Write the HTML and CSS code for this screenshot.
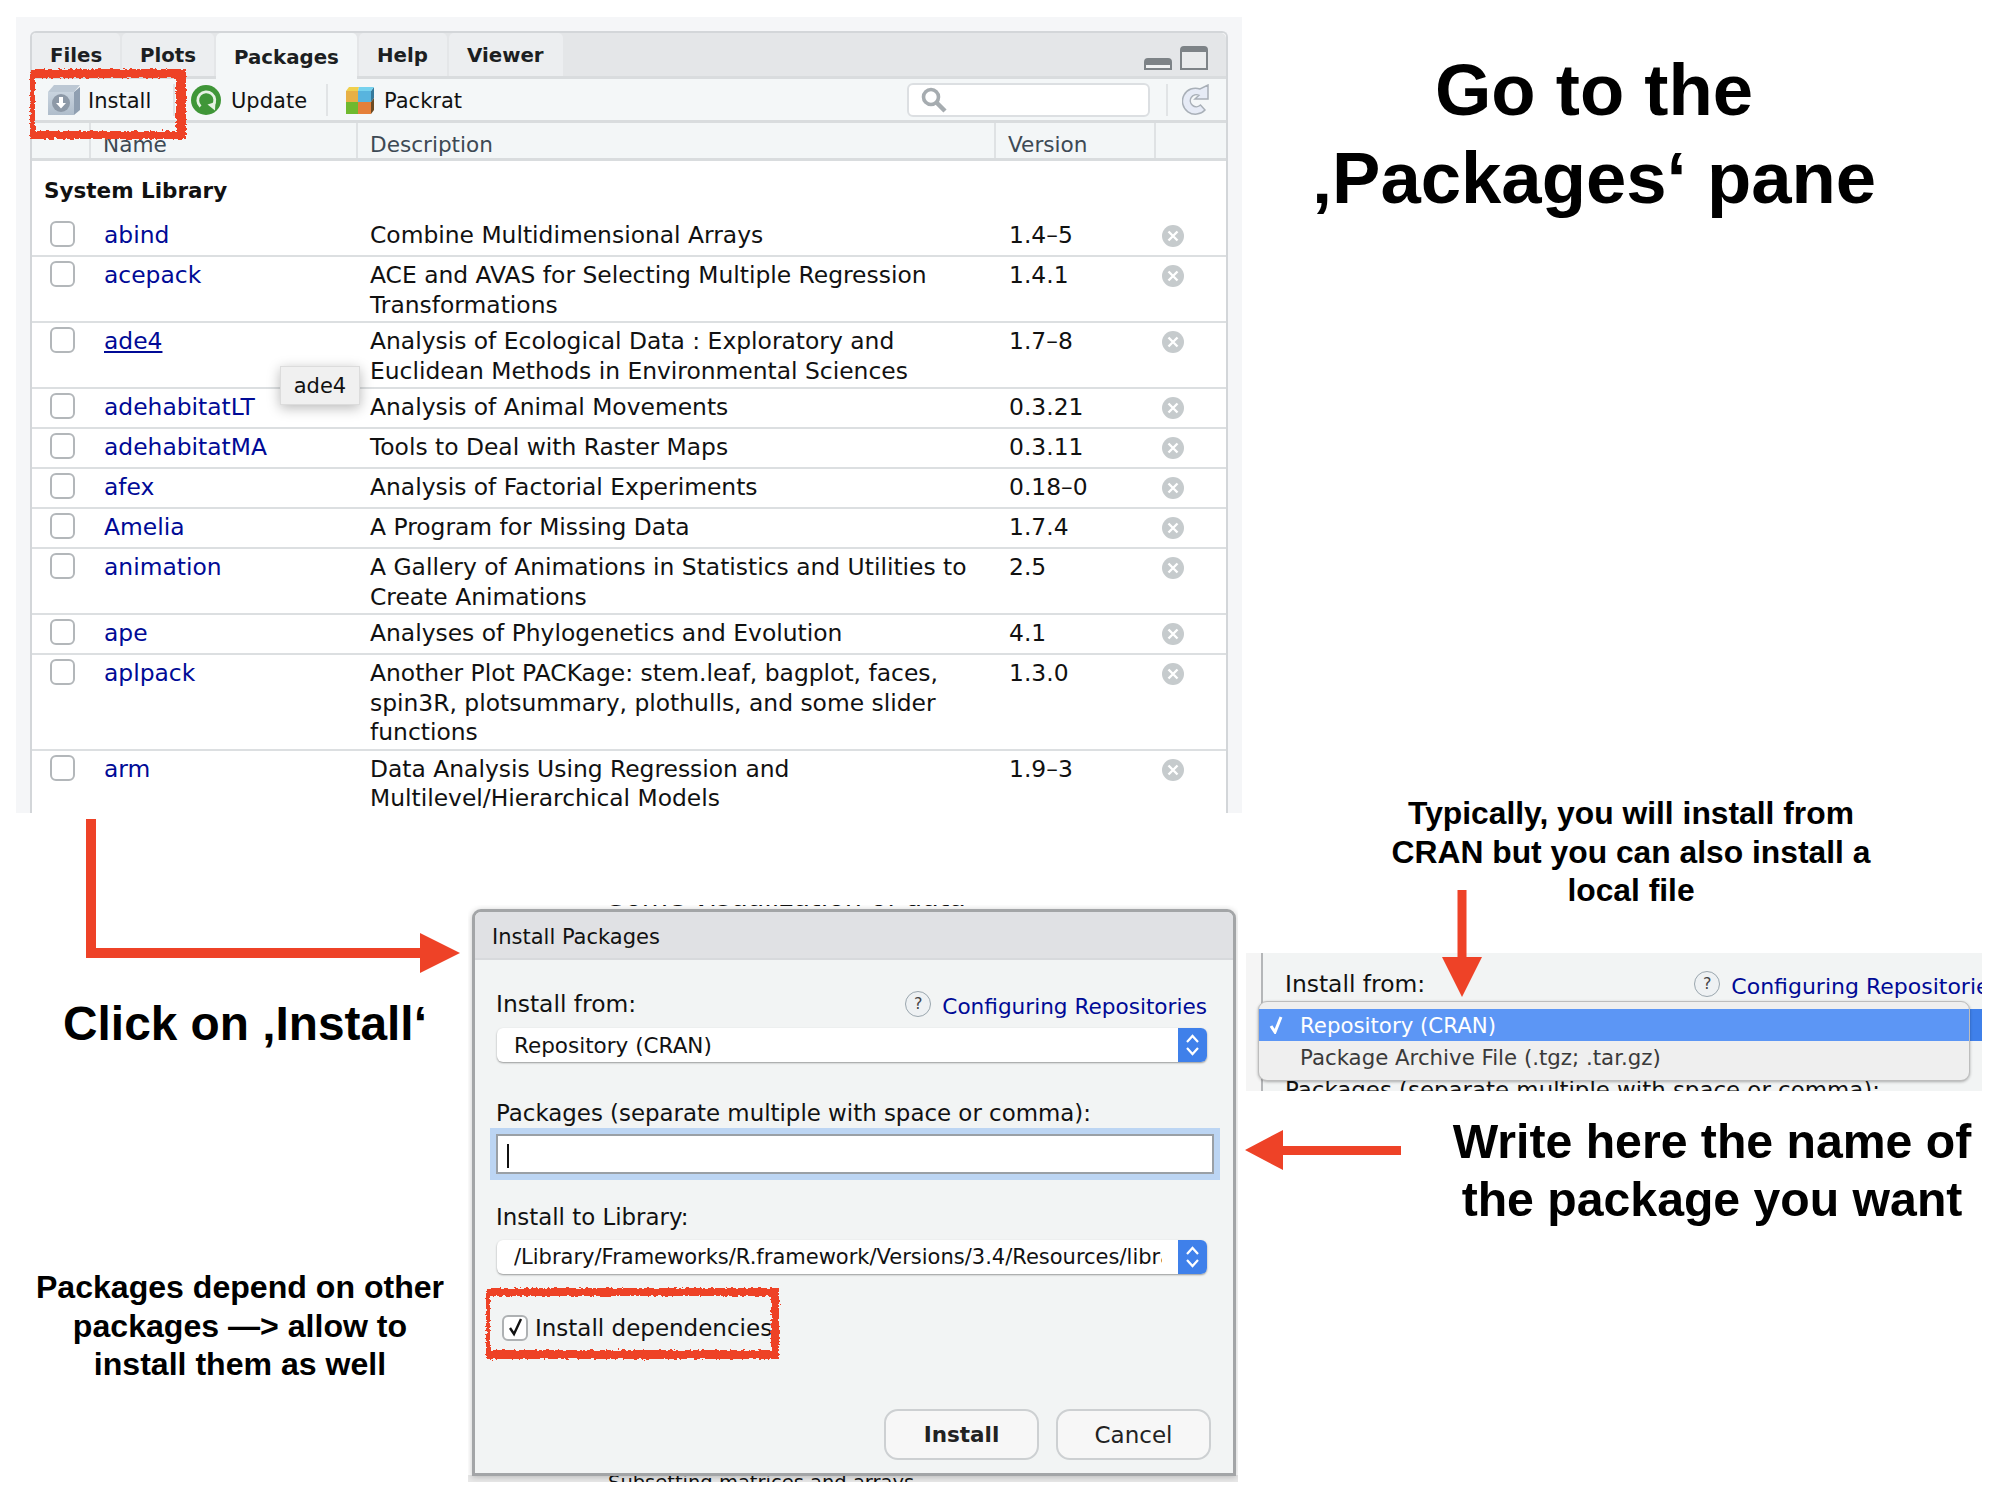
FILE: index.html
```html
<!DOCTYPE html>
<html lang="en">
<head>
<meta charset="utf-8">
<title>Install packages in RStudio</title>
<link rel="stylesheet" href="styles.css">
</head>
<body>
<svg class="defs" width="0" height="0" aria-hidden="true">
  <defs>
    <filter id="rough" x="-5%" y="-10%" width="110%" height="120%">
      <feTurbulence type="fractalNoise" baseFrequency="0.25 0.5" numOctaves="2" seed="4"/>
      <feDisplacementMap in="SourceGraphic" scale="5"/>
    </filter>
    <linearGradient id="boxface" x1="0" y1="0" x2="0" y2="1"><stop offset="0" stop-color="#c9d4df"/><stop offset="1" stop-color="#afbdcb"/></linearGradient>
    <symbol id="remove" viewBox="0 0 22 22">
      <circle cx="11" cy="11" r="11" fill="#c6cbcd"/>
      <path d="M6.5 6.5l9 9M15.5 6.5l-9 9" stroke="#fff" stroke-width="2.4"/>
    </symbol>
    <symbol id="updown" viewBox="0 0 29 34">
      <path d="M9 14l5.500-6 5.500 6M9 20l5.500 6 5.500-6" fill="none" stroke="#fff" stroke-width="2.200"/>
    </symbol>
  </defs>
</svg>

<main class="canvas">
  <section class="pane-shot">
    <div class="window">
      <div class="tabbar">
        <div class="tab tab-files">Files</div>
        <div class="tab tab-plots">Plots</div>
        <div class="tab tab-active">Packages</div>
        <div class="tab tab-help">Help</div>
        <div class="tab tab-viewer">Viewer</div>
        <div class="win-controls">
          <svg width="28" height="12" viewBox="0 0 28 12"><path d="M1 11V4a3 3 0 0 1 3-3h20a3 3 0 0 1 3 3v7z" fill="#f1f3f4" stroke="#7d8387" stroke-width="2"/><path d="M1 7V4a3 3 0 0 1 3-3h20a3 3 0 0 1 3 3v3z" fill="#7d8387"/></svg>
          <svg width="28" height="24" viewBox="0 0 28 24"><path d="M1 23V4a3 3 0 0 1 3-3h20a3 3 0 0 1 3 3v19z" fill="#e9ebec" stroke="#7d8387" stroke-width="2"/><path d="M1 6V4a3 3 0 0 1 3-3h20a3 3 0 0 1 3 3v2z" fill="#7d8387"/></svg>
        </div>
      </div>
      <div class="toolbar">
        <div class="tool tool-install">
          <svg width="32" height="30" viewBox="0 0 32 30"><path d="M0 7h26v23H0z" fill="url(#boxface)"/><path d="M26 7l6-5v23l-6 5z" fill="#8f9fb1"/><path d="M0 7l6-7h26l-6 7z" fill="#bcc8d4"/><circle cx="13" cy="18" r="9" fill="#8d99a7"/><path d="M11 12h4v6h3l-5 5.500-5-5.500h3z" fill="#fff"/></svg>
          <span class="tool-label">Install</span>
        </div>
        <div class="tool-sep sep-install"></div>
        <div class="tool tool-update">
          <svg width="30" height="30" viewBox="0 0 30 30"><circle cx="15" cy="15" r="15" fill="#3f9638"/><path d="M9.500 21.500a8.500 8.500 0 1 1 12.500-1" fill="none" stroke="#e6f2e4" stroke-width="2.800"/><path d="M16.500 19.500l8-2.500-.5 8.500z" fill="#e6f2e4"/></svg>
          <span class="tool-label">Update</span>
        </div>
        <div class="tool-sep sep-update"></div>
        <div class="tool tool-packrat">
          <svg width="28" height="28" viewBox="0 0 28 28"><path d="M0 5h12v11H0z" fill="#e7b045"/><path d="M12 5h13v11H12z" fill="#58b4de"/><path d="M0 16h12v12H0z" fill="#6fb92f"/><path d="M12 16h13v12H12z" fill="#e5803a"/><path d="M25 5l3-4v11l-3 4z" fill="#35799b"/><path d="M25 16l3-4v12l-3 4z" fill="#6b4a23"/><path d="M0 5l3-4h10l-1 4z" fill="#f0d04c"/><path d="M12 5l1-4h15l-3 4z" fill="#76d2ee"/></svg>
          <span class="tool-label">Packrat</span>
        </div>
        <div class="search">
          <svg width="26" height="26" viewBox="0 0 26 26"><circle cx="10" cy="10" r="7.500" fill="none" stroke="#a6acb0" stroke-width="3.600"/><path d="M15.500 15.500L24 24" stroke="#a6acb0" stroke-width="4.500"/></svg>
        </div>
        <div class="tool-sep"></div>
        <svg class="refresh" width="28" height="31" viewBox="0 0 28 31"><path d="M23 26A13 13 0 1 1 18 5L26 1V15H13L17 11.300A6 6 0 1 0 18.500 21Z" fill="#e6ebf6" stroke="#a9b0b8" stroke-width="1.500"/></svg>
      </div>
      <div class="thead">
        <div class="th th-check"></div>
        <div class="th th-name">Name</div>
        <div class="th th-desc">Description</div>
        <div class="th th-version">Version</div>
        <div class="th"></div>
      </div>
      <div class="library">System Library</div>
      <div class="row"><span class="box"></span><a class="pkg">abind</a><span class="desc">Combine Multidimensional Arrays</span><span class="ver">1.4–5</span><svg class="rm"><use href="#remove"/></svg></div>
      <div class="row"><span class="box"></span><a class="pkg">acepack</a><span class="desc">ACE and AVAS for Selecting Multiple Regression<br>Transformations</span><span class="ver">1.4.1</span><svg class="rm"><use href="#remove"/></svg></div>
      <div class="row"><span class="box"></span><a class="pkg pkg-hover">ade4</a><span class="desc">Analysis of Ecological Data : Exploratory and<br>Euclidean Methods in Environmental Sciences</span><span class="ver">1.7–8</span><svg class="rm"><use href="#remove"/></svg></div>
      <div class="row"><span class="box"></span><a class="pkg">adehabitatLT</a><span class="desc">Analysis of Animal Movements</span><span class="ver">0.3.21</span><svg class="rm"><use href="#remove"/></svg></div>
      <div class="row"><span class="box"></span><a class="pkg">adehabitatMA</a><span class="desc">Tools to Deal with Raster Maps</span><span class="ver">0.3.11</span><svg class="rm"><use href="#remove"/></svg></div>
      <div class="row"><span class="box"></span><a class="pkg">afex</a><span class="desc">Analysis of Factorial Experiments</span><span class="ver">0.18–0</span><svg class="rm"><use href="#remove"/></svg></div>
      <div class="row"><span class="box"></span><a class="pkg">Amelia</a><span class="desc">A Program for Missing Data</span><span class="ver">1.7.4</span><svg class="rm"><use href="#remove"/></svg></div>
      <div class="row"><span class="box"></span><a class="pkg">animation</a><span class="desc">A Gallery of Animations in Statistics and Utilities to<br>Create Animations</span><span class="ver">2.5</span><svg class="rm"><use href="#remove"/></svg></div>
      <div class="row"><span class="box"></span><a class="pkg">ape</a><span class="desc">Analyses of Phylogenetics and Evolution</span><span class="ver">4.1</span><svg class="rm"><use href="#remove"/></svg></div>
      <div class="row"><span class="box"></span><a class="pkg">aplpack</a><span class="desc">Another Plot PACKage: stem.leaf, bagplot, faces,<br>spin3R, plotsummary, plothulls, and some slider<br>functions</span><span class="ver">1.3.0</span><svg class="rm"><use href="#remove"/></svg></div>
      <div class="row"><span class="box"></span><a class="pkg">arm</a><span class="desc">Data Analysis Using Regression and<br>Multilevel/Hierarchical Models</span><span class="ver">1.9–3</span><svg class="rm"><use href="#remove"/></svg></div>
    </div>
    <div class="tooltip">ade4</div>
  </section>
  <div class="sketch sketch-install"></div>

  <h1 class="note note-title">Go to the<br>‚Packages‘ pane</h1>
  <p class="note note-click">Click on ‚Install‘</p>
  <p class="note note-deps">Packages depend on other<br>packages —&gt; allow to<br>install them as well</p>
  <p class="note note-typ">Typically, you will install from<br>CRAN but you can also install a<br>local file</p>
  <p class="note note-write">Write here the name of<br>the package you want</p>

  <svg class="arrow arrow-elbow" width="374" height="154" viewBox="0 0 374 154"><path d="M0 0h10v129h324v-15l40 20-40 20v-15H0z" fill="#ee4227"/></svg>
  <svg class="arrow arrow-left" width="156" height="40" viewBox="0 0 156 40"><path d="M156 16v9H38v15L0 20 38 0v16z" fill="#ee4227"/></svg>

  <section class="dialog-shot">
    <div class="behind behind-top"><span>Some visualization of data</span></div>
    <div class="behind behind-bottom"><span>Subsetting matrices and arrays</span></div>
    <div class="dialog">
      <div class="dialog-title">Install Packages</div>
      <div class="dialog-body">
        <div class="label-row">
          <label>Install from:</label>
          <div class="help-link"><span class="help">?</span><a>Configuring Repositories</a></div>
        </div>
        <div class="select"><span>Repository (CRAN)</span><span class="select-btn"><svg width="29" height="34"><use href="#updown"/></svg></span></div>
        <label class="label-packages">Packages (separate multiple with space or comma):</label>
        <div class="input"><i class="caret"></i></div>
        <label class="label-library">Install to Library:</label>
        <div class="select"><span class="path">/Library/Frameworks/R.framework/Versions/3.4/Resources/library</span><span class="select-btn"><svg width="29" height="34"><use href="#updown"/></svg></span></div>
        <div class="dep-row"><span class="dep-box"><svg width="18" height="20" viewBox="0 0 18 20"><path d="M3 11l4 6L14 2" fill="none" stroke="#111" stroke-width="2.400"/></svg></span><span>Install dependencies</span></div>
        <div class="buttons"><button class="btn btn-strong">Install</button><button class="btn btn-plain">Cancel</button></div>
      </div>
    </div>
  </section>
  <div class="sketch sketch-deps"></div>

  <section class="popup-shot">
    <div class="popup-bg">
      <div class="label-row popup-labels">
        <label>Install from:</label>
        <div class="help-link"><span class="help">?</span><a>Configuring Repositories</a></div>
      </div>
      <label class="popup-under">Packages (separate multiple with space or comma):</label>
    </div>
    <div class="popup-stub"></div>
    <ul class="popup-menu">
      <li class="popup-on"><svg class="tick" width="14" height="18" viewBox="0 0 14 18"><path d="M2 10l4 6 6-15" fill="none" stroke="#fff" stroke-width="3"/></svg>Repository (CRAN)</li>
      <li>Package Archive File (.tgz; .tar.gz)</li>
    </ul>
  </section>
  <svg class="arrow arrow-down" width="40" height="107" viewBox="0 0 40 107"><path d="M15.500 0h9v67H40l-20 40L0 67h15.500z" fill="#ee4227"/></svg>
</main>
</body>
</html>
```
FILE: styles.css
```css
* { box-sizing: border-box; }
html, body { margin: 0; padding: 0; background: #fff; }
.defs { position: absolute; }
.canvas {
  position: relative;
  width: 2008px;
  height: 1498px;
  overflow: hidden;
  font-family: "DejaVu Sans", sans-serif;
  font-size: 23.4px;
  color: #111;
}

/* --- annotated screenshot: packages pane --- */
.pane-shot {
  position: absolute;
  left: 16px;
  top: 17px;
  width: 1226px;
  height: 796px;
  padding: 14px 14px 0 14px;
  background: #f5f6f8;
  overflow: hidden;
}
.window {
  height: 790px;
  border: 2px solid #d3d6d9;
  border-bottom: 0;
  border-radius: 6px 6px 0 0;
  background: #fff;
}
.tabbar {
  display: flex;
  height: 46px;
  gap: 2px;
  background: #e4e6e8;
  border-bottom: 3px solid #d9dcde;
  border-radius: 5px 5px 0 0;
}
.tab {
  display: flex;
  align-items: center;
  padding: 2px 0 0 18px;
  height: 43px;
  font-weight: 700;
  font-size: 19.8px;
  background: #eceef0;
  border-radius: 5px 5px 0 0;
  color: #1c1f22;
}
.tab-files { width: 88px; }
.tab-plots { width: 92px; }
.tab-active { width: 141px; height: 46px; background: #f4f7f8; position: relative; z-index: 1; }
.tab-help { width: 88px; }
.tab-viewer { width: 114px; }
.win-controls {
  margin-left: auto;
  display: flex;
  align-items: flex-end;
  gap: 8px;
  padding: 0 18px 6px 0;
}
.toolbar {
  display: flex;
  align-items: center;
  height: 44px;
  background: #f4f7f8;
  border-bottom: 3px solid #d9dcde;
  padding-left: 16px;
  font-size: 21px;
}
.tool { display: flex; align-items: center; }
.tool-label { padding-top: 2px; }
.tool-install { gap: 8px; width: 125px; }
.tool-update { gap: 10px; margin-left: 16px; width: 135px; }
.tool-packrat { gap: 10px; margin-left: 18px; }
.tool-sep { width: 2px; height: 32px; background: #e1e4e6; }
.search {
  display: flex;
  align-items: center;
  margin-left: auto;
  margin-right: 16px;
  width: 243px;
  height: 34px;
  padding-left: 12px;
  background: #fff;
  border: 2px solid #dcdfe2;
  border-radius: 6px;
}
.refresh { margin: 0 16px 0 14px; }
.thead {
  display: grid;
  grid-template-columns: 59px 267px 638px 160px 1fr;
  height: 38px;
  background: #f3f6f7;
  border-bottom: 3px solid #d9dcde;
}
.th {
  border-right: 2px solid #dfe2e4;
  padding: 8px 0 0 12px;
  line-height: 27px;
  font-size: 21.6px;
  color: #3d4954;
}
.th-name { padding-left: 12px; }
.th:last-child { border-right: 0; }
.library {
  height: 56px;
  padding: 15px 0 0 12px;
  font-weight: 700;
  font-size: 21.5px;
  line-height: 29px;
}
.row {
  display: grid;
  grid-template-columns: 72px 266px 639px 153px 24px;
  align-items: start;
  min-height: 40px;
  padding: 4px 0 1px;
  line-height: 29.500px;
  border-bottom: 2px solid #dcdfe1;
}
.box {
  display: block;
  width: 25px;
  height: 26px;
  margin-left: 18px;
  background: #fff;
  border: 2px solid #b3b7ba;
  border-radius: 6px;
}
.pkg { color: #000a96; }
.pkg-hover { text-decoration: underline; }
.rm { display: block; width: 22px; height: 22px; margin-top: 4px; }
.tooltip {
  position: absolute;
  left: 264px;
  top: 349px;
  width: 80px;
  height: 39px;
  line-height: 38px;
  text-align: center;
  font-size: 21px;
  background: #f0f0f0;
  border: 1px solid #dcdcdc;
  box-shadow: 0 3px 12px rgba(0,0,0,.28);
}

/* --- hand-drawn highlight boxes --- */
.sketch {
  position: absolute;
  border: solid #ee4227;
  filter: url(#rough);
}
.sketch-install { left: 30px; top: 69px; width: 156px; height: 70px; border-width: 9px 10px 8px 5px; }
.sketch-deps { left: 486px; top: 1288px; width: 293px; height: 71px; border-width: 8px 8px 9px 4px; }

/* --- annotations --- */
.note {
  position: absolute;
  margin: 0;
  font-family: "Liberation Sans", Arial, sans-serif;
  font-weight: 700;
  text-align: center;
  color: #000;
  white-space: nowrap;
}
.note-title { left: 1294px; top: 46px; width: 600px; font-size: 72.500px; line-height: 88px; }
.note-click { left: 55px; top: 996px; width: 380px; font-size: 47.800px; line-height: 56px; }
.note-deps { left: 20px; top: 1268px; width: 440px; font-size: 32.100px; line-height: 38.500px; }
.note-typ { left: 1371px; top: 794px; width: 520px; font-size: 31.800px; line-height: 38.500px; }
.note-write { left: 1442px; top: 1112px; width: 540px; font-size: 48.200px; line-height: 58px; }
.arrow { position: absolute; display: block; }
.arrow-elbow { left: 86px; top: 819px; }
.arrow-left { left: 1245px; top: 1130px; }
.arrow-down { left: 1442px; top: 890px; }

/* --- install dialog --- */
.dialog-shot {
  position: absolute;
  left: 468px;
  top: 905px;
  width: 770px;
  height: 577px;
  background: #fff;
  overflow: hidden;
}
.behind {
  position: absolute;
  left: 0;
  width: 100%;
  overflow: hidden;
  padding-left: 140px;
  line-height: 20px;
}
.behind-top { top: 0; height: 4px; font-size: 27px; }
.behind-top span { display: block; margin-top: -18px; }
.behind-bottom { bottom: 0; height: 7px; font-size: 19.500px; background: #e8e8e8; }
.behind-bottom span { display: block; margin-top: -2px; }
.dialog {
  position: absolute;
  left: 4px;
  top: 4px;
  width: 764px;
  height: 567px;
  background: #f2f4f4;
  border: 3px solid #a3a5a7;
  border-radius: 9px 9px 0 0;
  box-shadow: 0 1px 6px rgba(0,0,0,.22);
  font-size: 23.4px;
}
.dialog-title {
  height: 48px;
  padding: 10px 0 0 17px;
  line-height: 30px;
  background: #e0e1e4;
  border-bottom: 2px solid #d7d9dc;
  border-radius: 6px 6px 0 0;
  font-size: 21px;
}
.dialog-body { padding: 0 26px 0 21px; }
.label-row {
  display: flex;
  justify-content: space-between;
  align-items: center;
  height: 30px;
  margin-top: 29px;
  line-height: 30px;
}
.help-link { display: flex; align-items: center; gap: 11px; }
.help-link a { color: #000a96; position: relative; top: 3px; font-size: 21.6px; white-space: nowrap; }
.help {
  display: block;
  width: 26px;
  height: 26px;
  line-height: 24px;
  text-align: center;
  font-size: 16px;
  color: #444;
  background: #eef1f3;
  border: 1px solid #9aa6ae;
  border-radius: 50%;
}
.select {
  display: flex;
  justify-content: space-between;
  height: 34px;
  margin: 9px 0 0 1px;
  padding-left: 17px;
  font-size: 21.5px;
  line-height: 35px;
  background: #fff;
  border-radius: 6px;
  box-shadow: 0 1px 2px rgba(0,0,0,.38);
  overflow: hidden;
}
.path { width: 648px; overflow: hidden; white-space: nowrap; font-size: 21px; }
.select-btn { flex: none; width: 29px; height: 34px; background: #3f80ea; }
.select-btn svg { display: block; }
.label-packages { display: block; margin-top: 36px; line-height: 30px; font-size: 22.900px; }
.input {
  width: 718px;
  height: 40px;
  margin-top: 6px;
  padding: 8px 0 0 9px;
  background: #fff;
  border: 2px solid #9aa0a6;
  box-shadow: 0 0 0 6px #bcd5f3;
}
.caret { display: block; width: 2px; height: 24px; background: #111; }
.label-library { display: block; margin-top: 28px; line-height: 30px; font-size: 22.900px; }
.label-library + .select { margin-top: 8px; }
.dep-row {
  display: flex;
  align-items: center;
  gap: 7px;
  height: 30px;
  margin: 39px 0 0 6px;
  font-size: 23px;
}
.dep-box {
  display: block;
  width: 26px;
  height: 26px;
  padding-left: 3px;
  background: #fff;
  border: 2px solid #aeb1b3;
  border-radius: 6px;
}
.dep-box svg { display: block; }
.buttons { display: flex; justify-content: flex-end; gap: 17px; margin: 66px -4px 0 0; }
.btn {
  width: 155px;
  height: 51px;
  font: inherit;
  font-size: 21.5px;
  color: #222;
  background: #f7f7f7;
  border: 2px solid #cdd0d2;
  border-radius: 14px;
}
.btn-strong { font-weight: 700; }
.btn-plain { font-size: 23px; }

/* --- source dropdown --- */
.popup-shot {
  position: absolute;
  left: 1246px;
  top: 953px;
  width: 736px;
  height: 138px;
  overflow: hidden;
  background: #f5f5f5;
}
.popup-bg {
  height: 138px;
  margin-left: 15px;
  padding: 16px 0 0 22px;
  background: #f2f4f4;
  border-left: 2px solid #b4b6b8;
}
.popup-labels { margin: 0; width: 716px; }
.popup-labels .help-link a { font-size: 22px; }
.popup-under { display: block; margin-top: 76px; line-height: 30px; font-size: 22.900px; white-space: nowrap; }
.popup-stub {
  position: absolute;
  right: 0;
  top: 56px;
  width: 20px;
  height: 32px;
  background: #3f80ea;
}
.popup-menu {
  position: absolute;
  left: 12px;
  top: 48px;
  width: 712px;
  height: 80px;
  margin: 0;
  padding: 7px 0 0;
  list-style: none;
  background: #efefef;
  border: 1px solid #bdbdbd;
  border-radius: 9px;
  box-shadow: 0 1px 3px rgba(0,0,0,.3);
  font-size: 21.3px;
}
.popup-menu li {
  position: relative;
  height: 32px;
  padding-left: 41px;
  line-height: 33px;
  color: #3a3a3a;
}
.popup-menu .popup-on { background: #5c96f5; color: #fff; }
.tick { position: absolute; left: 10px; top: 7px; }
```
